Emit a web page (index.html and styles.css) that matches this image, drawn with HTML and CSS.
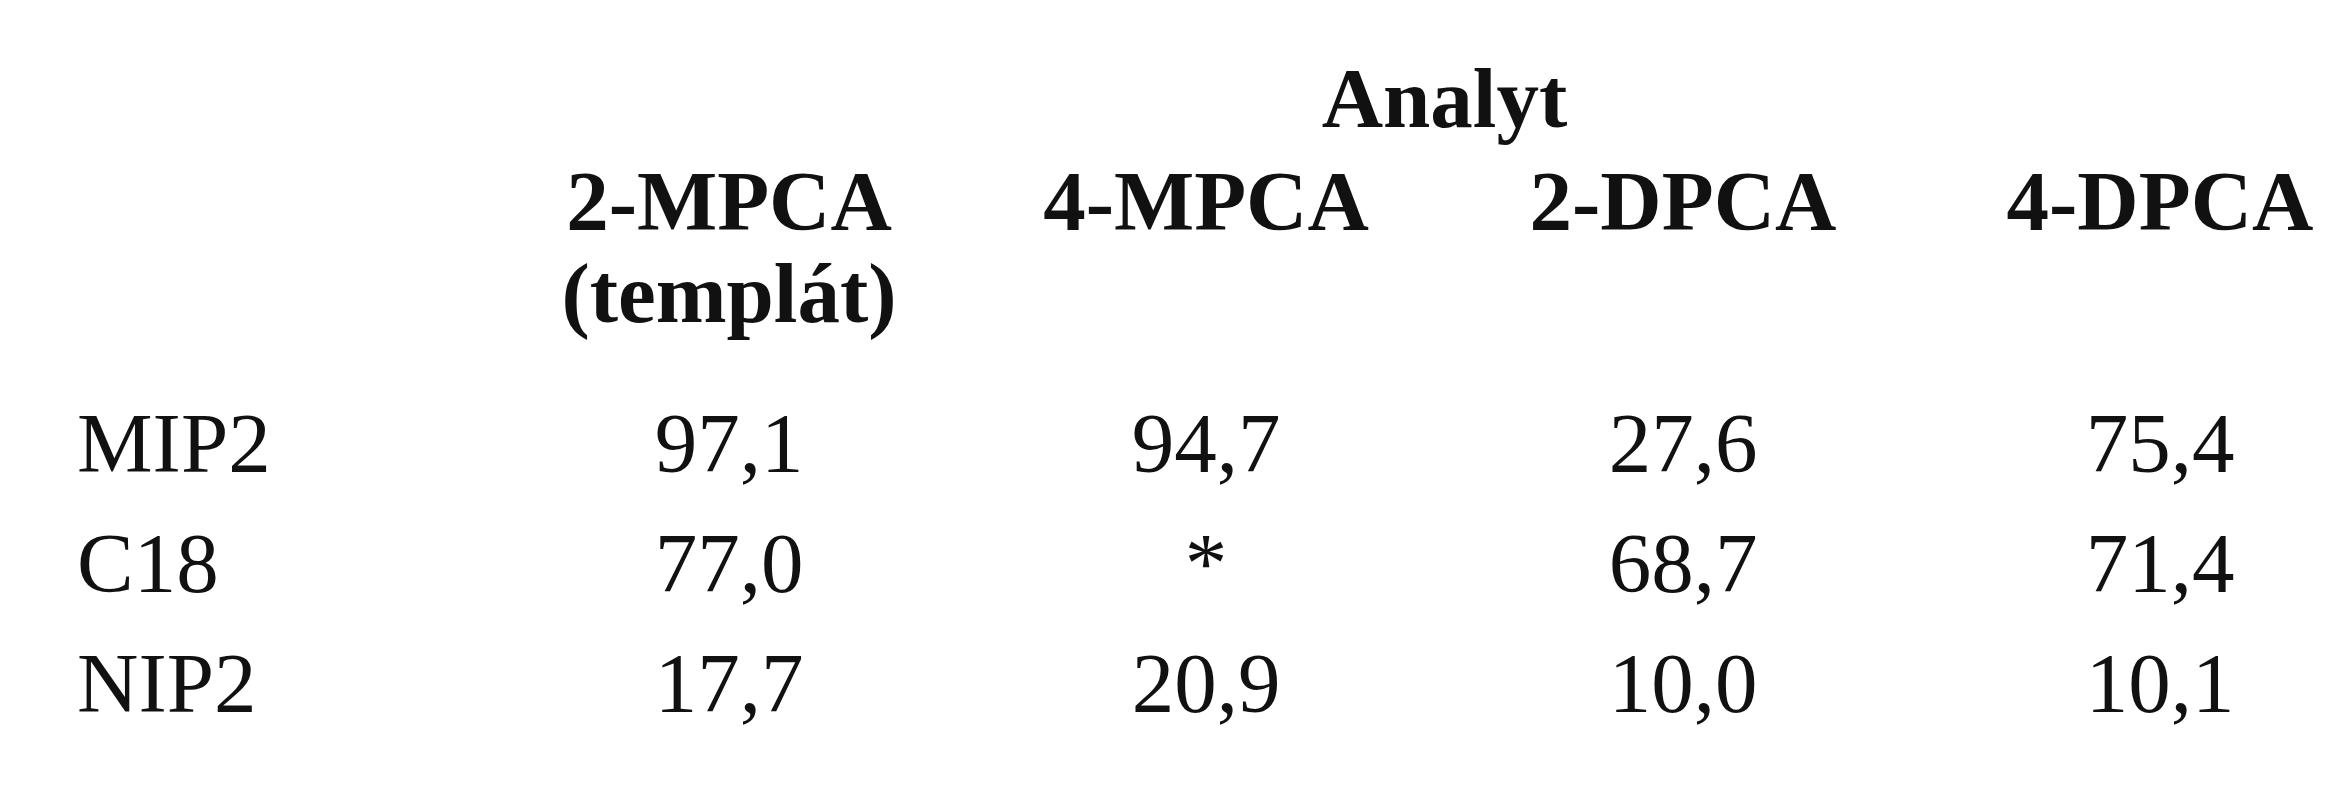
FILE: index.html
```html
<!DOCTYPE html>
<html lang="cs">
<head>
<meta charset="utf-8">
<title>Analyt</title>
<link rel="stylesheet" href="styles.css">
</head>
<body>
<div class="tbl">
  <div class="analyt">Analyt</div>

  <div class="hcell first"></div>
  <div class="hcell">2-MPCA<br>(templát)</div>
  <div class="hcell">4-MPCA</div>
  <div class="hcell">2-DPCA</div>
  <div class="hcell">4-DPCA</div>

  <div class="label">MIP2</div>
  <div class="val">97,1</div>
  <div class="val">94,7</div>
  <div class="val">27,6</div>
  <div class="val">75,4</div>

  <div class="label">C18</div>
  <div class="val">77,0</div>
  <div class="val">*</div>
  <div class="val">68,7</div>
  <div class="val">71,4</div>

  <div class="label">NIP2</div>
  <div class="val">17,7</div>
  <div class="val">20,9</div>
  <div class="val">10,0</div>
  <div class="val">10,1</div>
</div>
</body>
</html>
```
FILE: styles.css
```css
html, body {
  margin: 0;
  padding: 0;
  background: #ffffff;
  overflow: hidden;
}

body {
  font-family: "Liberation Serif", "Times New Roman", serif;
  font-size: 85px;
  color: #111111;
}

.tbl {
  display: grid;
  grid-template-columns: 422px repeat(4, 340px);
  grid-template-rows: 103px 228px 120px 120px 120px;
  column-gap: 137px;
  padding-top: 52px;
  align-items: start;
}

.analyt {
  grid-column: 2 / 6;
  text-align: center;
  font-weight: bold;
  line-height: 92px;
}

.hcell {
  text-align: center;
  font-weight: bold;
  line-height: 92px;
  white-space: nowrap;
}

.label {
  padding-left: 77px;
  line-height: 120px;
}

.val {
  text-align: center;
  line-height: 120px;
}
```
